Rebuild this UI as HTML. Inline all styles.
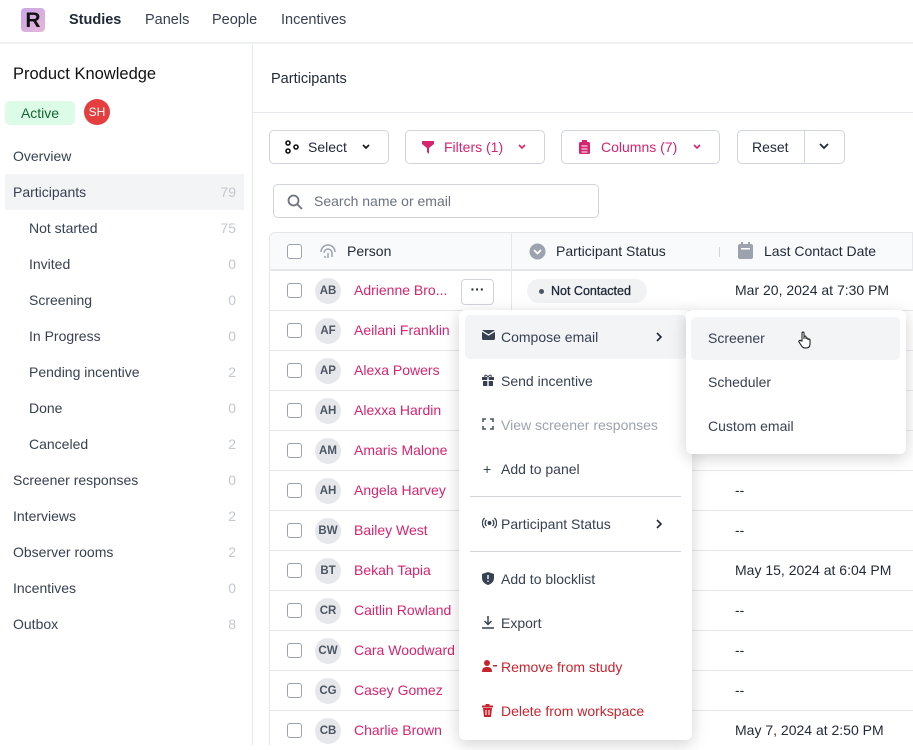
<!DOCTYPE html><html><head><style>
*{box-sizing:border-box;margin:0;padding:0}
body{width:913px;height:745px;overflow:hidden;font-family:"Liberation Sans",sans-serif;font-size:14px;color:#1f2937;background:#fff;position:relative}
.a{position:absolute}
.nav{left:0;top:0;width:913px;height:44px;border-bottom:2px solid #f0f1f3}
.nav span{position:absolute;top:12px;font-size:14.5px;color:#374151}
.side{left:0;top:45px;width:253px;height:700px;border-right:1px solid #e5e7eb}
.si{position:absolute;left:13px;width:231px;height:36px;line-height:36px;color:#374151}
.si b{position:absolute;right:8px;font-weight:normal;color:#c4c8ce}
.btn{position:absolute;top:130px;height:34px;border:1px solid #d1d5db;border-radius:5px;line-height:32px;color:#1f2937}
.pk{color:#d6246e}
.row{position:absolute;left:270px;width:643px;height:40px;border-top:1px solid #e5e7eb}
.cb{position:absolute;left:17px;top:12px;width:15px;height:15px;border:1.3px solid #9ca3af;border-radius:3px;background:#fff}
.av{position:absolute;left:45px;top:7px;width:26px;height:26px;border-radius:13px;background:#e5e7eb;color:#4b5563;font-size:11.5px;font-weight:bold;text-align:center;line-height:26px}
.nm{position:absolute;left:84px;top:11px;color:#d6246e}
.dt{position:absolute;left:465px;top:11px}
.menu{left:459px;top:310px;width:233px;height:430px;background:#fff;border-radius:6px;box-shadow:0 4px 16px rgba(0,0,0,.18)}
.mi{position:absolute;left:6px;width:221px;height:44px;line-height:44px;padding-left:36px;color:#374151}
.mi svg{position:absolute;left:17px;top:15px}
.sub{left:686px;top:310px;width:220px;height:144px;background:#fff;border-radius:6px;box-shadow:0 4px 16px rgba(0,0,0,.18)}
.red{color:#c8242e}
.chev{position:absolute;top:12px}
</style></head><body>
<div class="a nav">
<div class="a" style="left:21px;top:8px;width:24px;height:24px;border-radius:4px;background:linear-gradient(135deg,#c9a6e8,#e7b6d8);font:bold 21px/25px 'Liberation Sans';text-align:center;color:#111">R</div>
<span style="left:69px;font-weight:bold;color:#1f2937">Studies</span><span style="left:145px">Panels</span><span style="left:212px">People</span><span style="left:281px">Incentives</span>
</div>
<div class="a side">
<div class="a" style="left:13px;top:20px;font-size:16.5px;color:#111">Product Knowledge</div>
<div class="a" style="left:5px;top:56px;width:70px;height:24px;border-radius:5px;background:#dcfce7;color:#166534;text-align:center;line-height:24px">Active</div>
<div class="a" style="left:84px;top:54px;width:26px;height:26px;border-radius:13px;background:#e53e3e;color:#fff;font-size:12px;text-align:center;line-height:26px">SH</div>
<div class="si" style="top:93px">Overview</div>
<div class="si" style="top:129px;left:5px;width:239px;padding-left:8px;background:#f3f4f6">Participants<b>79</b></div>
<div class="si" style="top:165px;padding-left:16px">Not started<b>75</b></div>
<div class="si" style="top:201px;padding-left:16px">Invited<b>0</b></div>
<div class="si" style="top:237px;padding-left:16px">Screening<b>0</b></div>
<div class="si" style="top:273px;padding-left:16px">In Progress<b>0</b></div>
<div class="si" style="top:309px;padding-left:16px">Pending incentive<b>2</b></div>
<div class="si" style="top:345px;padding-left:16px">Done<b>0</b></div>
<div class="si" style="top:381px;padding-left:16px">Canceled<b>2</b></div>
<div class="si" style="top:417px">Screener responses<b>0</b></div>
<div class="si" style="top:453px">Interviews<b>2</b></div>
<div class="si" style="top:489px">Observer rooms<b>2</b></div>
<div class="si" style="top:525px">Incentives<b>0</b></div>
<div class="si" style="top:561px">Outbox<b>8</b></div>
</div>
<div class="a" style="left:271px;top:71px;color:#1f2937;font-size:14.5px">Participants</div>
<div class="a" style="left:253px;top:112px;width:660px;border-top:1px solid #e5e7eb"></div>
<div class="btn" style="left:269px;width:120px;padding-left:38px"><svg class="a" style="left:15px;top:9px" width="14" height="14" viewBox="0 0 14 14" fill="none" stroke="#111" stroke-width="1.6"><circle cx="3" cy="3" r="2"/><circle cx="3" cy="11" r="2"/><circle cx="11" cy="7" r="2"/></svg>Select<svg class="chev" style="left:91px" width="10" height="8" viewBox="0 0 10 8" fill="none" stroke="#111" stroke-width="1.6"><path d="M2 2l3 3 3-3"/></svg></div>
<div class="btn pk" style="left:405px;width:140px;padding-left:38px"><svg class="a" style="left:16px;top:10px" width="12" height="13" viewBox="0 0 12 13"><path d="M0 0h12v3L7 7v6L5 11V7L0 3z" fill="#d6246e"/></svg>Filters (1)<svg class="chev" style="left:111px" width="10" height="8" viewBox="0 0 10 8" fill="none" stroke="#d6246e" stroke-width="1.6"><path d="M2 2l3 3 3-3"/></svg></div>
<div class="btn pk" style="left:561px;width:159px;padding-left:39px"><svg class="a" style="left:17px;top:9px" width="11" height="14" viewBox="0 0 11 14"><rect x="0" y="2" width="11" height="12" rx="1.5" fill="#d6246e"/><rect x="3" y="0" width="5" height="3" fill="#d6246e"/><path d="M2.5 6h6M2.5 9h6M2.5 12h6" stroke="#fff" stroke-width="1"/></svg>Columns (7)<svg class="chev" style="left:130px" width="10" height="8" viewBox="0 0 10 8" fill="none" stroke="#d6246e" stroke-width="1.6"><path d="M2 2l3 3 3-3"/></svg></div>
<div class="btn" style="left:737px;width:108px"><span class="a" style="left:14px">Reset</span><div class="a" style="left:66px;top:0;height:32px;border-left:1px solid #d1d5db"></div><svg class="chev" style="left:80px;top:11px" width="12" height="9" viewBox="0 0 12 9" fill="none" stroke="#1f2937" stroke-width="1.8"><path d="M2 2l4 4 4-4"/></svg></div>
<div class="a" style="left:273px;top:184px;width:326px;height:34px;border:1px solid #d1d5db;border-radius:5px"><svg class="a" style="left:13px;top:9px" width="16" height="16" viewBox="0 0 16 16" fill="none" stroke="#6b7280" stroke-width="1.8"><circle cx="6.5" cy="6.5" r="5"/><path d="M10.5 10.5L15 15"/></svg><span class="a" style="left:40px;top:8px;color:#6b7280">Search name or email</span></div>
<div class="a" style="left:269px;top:232px;width:644px;height:38px;background:#f9fafb;border:1px solid #e5e7eb;border-radius:6px 0 0 0">
<div class="cb" style="left:17px;top:11px"></div>
<svg class="a" style="left:49px;top:10px" width="18" height="16" viewBox="0 0 18 16" fill="none" stroke="#9ca3af" stroke-width="1.5"><path d="M2 9a7 7 0 0 1 14 0M5 10a4 4 0 0 1 8 0v4M9 10v5M6 13v2"/></svg>
<span class="a" style="left:77px;top:10px;color:#1f2937">Person</span>
<div class="a" style="left:241px;top:0;height:37px;border-left:1px solid #e5e7eb"></div>
<svg class="a" style="left:259px;top:10px" width="17" height="17" viewBox="0 0 17 17"><circle cx="8.5" cy="8.5" r="8" fill="#9ca3af"/><path d="M5 7l3.5 3.5L12 7" stroke="#fff" stroke-width="1.8" fill="none"/></svg>
<span class="a" style="left:286px;top:10px">Participant Status</span>
<div class="a" style="left:449px;top:14px;height:10px;border-left:1px solid #d1d5db"></div>
<svg class="a" style="left:468px;top:9px" width="15" height="17" viewBox="0 0 15 17"><rect x="0" y="2" width="15" height="15" rx="2" fill="#9ca3af"/><rect x="3" y="0" width="2" height="4" fill="#9ca3af"/><rect x="10" y="0" width="2" height="4" fill="#9ca3af"/><rect x="3" y="6" width="9" height="1.5" fill="#fff"/></svg>
<span class="a" style="left:494px;top:10px">Last Contact Date</span>
</div>
<div class="row" style="top:270px"><div class="cb"></div><div class="av">AB</div><div class="nm">Adrienne Bro...</div>
<div class="a" style="left:191px;top:8px;width:33px;height:26px;border:1px solid #d1d5db;border-radius:4px;text-align:center;line-height:18px;font-weight:bold">···</div>
<div class="a" style="left:241px;top:-1px;height:41px;border-left:1px solid #e5e7eb"></div>
<div class="a" style="left:257px;top:8px;width:120px;height:24px;border-radius:12px;background:#f1f2f4;font-size:12.5px;line-height:24px;padding-left:24px;color:#1f2937;-webkit-text-stroke:0.3px #1f2937">Not Contacted<span class="a" style="left:12px;top:10px;width:5px;height:5px;border-radius:3px;background:#4b5563"></span></div>
<div class="dt">Mar 20, 2024 at 7:30 PM</div></div>
<div class="row" style="top:310px"><div class="cb"></div><div class="av">AF</div><div class="nm">Aeilani Franklin</div></div>
<div class="row" style="top:350px"><div class="cb"></div><div class="av">AP</div><div class="nm">Alexa Powers</div></div>
<div class="row" style="top:390px"><div class="cb"></div><div class="av">AH</div><div class="nm">Alexxa Hardin</div></div>
<div class="row" style="top:430px"><div class="cb"></div><div class="av">AM</div><div class="nm">Amaris Malone</div></div>
<div class="row" style="top:470px"><div class="cb"></div><div class="av">AH</div><div class="nm">Angela Harvey</div><div class="dt">--</div></div>
<div class="row" style="top:510px"><div class="cb"></div><div class="av">BW</div><div class="nm">Bailey West</div><div class="dt">--</div></div>
<div class="row" style="top:550px"><div class="cb"></div><div class="av">BT</div><div class="nm">Bekah Tapia</div><div class="dt">May 15, 2024 at 6:04 PM</div></div>
<div class="row" style="top:590px"><div class="cb"></div><div class="av">CR</div><div class="nm">Caitlin Rowland</div><div class="dt">--</div></div>
<div class="row" style="top:630px"><div class="cb"></div><div class="av">CW</div><div class="nm">Cara Woodward</div><div class="dt">--</div></div>
<div class="row" style="top:670px"><div class="cb"></div><div class="av">CG</div><div class="nm">Casey Gomez</div><div class="dt">--</div></div>
<div class="row" style="top:710px"><div class="cb"></div><div class="av">CB</div><div class="nm">Charlie Brown</div><div class="dt">May 7, 2024 at 2:50 PM</div></div>
<div class="a" style="left:269px;top:270px;height:475px;border-left:1px solid #e5e7eb"></div>
<div class="a menu">
<div class="mi" style="top:5px;background:#f3f4f6;border-radius:5px"><svg width="13" height="10" viewBox="0 0 13 10"><rect width="13" height="10" rx="1.5" fill="#374151"/><path d="M0 1l6.5 4L13 1" stroke="#fff" stroke-width="1.2" fill="none"/></svg>Compose email<svg class="a" style="left:190px;top:17px" width="8" height="10" viewBox="0 0 8 10" fill="none" stroke="#1f2937" stroke-width="1.6"><path d="M2 1l4 4-4 4"/></svg></div>
<div class="mi" style="top:49px"><svg width="12" height="12" viewBox="0 0 12 12"><rect y="3" width="12" height="3" fill="#374151"/><rect x="1" y="7" width="10" height="5" fill="#374151"/><rect x="5.3" y="3" width="1.4" height="9" fill="#fff"/><path d="M6 3C4 0 2 1 3 3M6 3c2-3 4-2 3 0" stroke="#374151" fill="none"/></svg>Send incentive</div>
<div class="mi" style="top:93px;color:#9ca3af"><svg width="12" height="12" viewBox="0 0 12 12" fill="none" stroke="#4b5563" stroke-width="1.6"><path d="M1 4V1h3M8 1h3v3M11 8v3H8M4 11H1V8"/></svg>View screener responses</div>
<div class="mi" style="top:137px"><span class="a" style="left:18px">+</span>Add to panel</div>
<div class="a" style="left:11px;top:186px;width:211px;border-top:1px solid #d1d5db"></div>
<div class="mi" style="top:192px"><svg width="15" height="12" viewBox="0 0 15 12" fill="none" stroke="#374151" stroke-width="1.3"><circle cx="7.5" cy="6" r="1.3" fill="#374151"/><path d="M4.5 3a4 4 0 0 0 0 6M10.5 3a4 4 0 0 1 0 6M2.5 1a7 7 0 0 0 0 10M12.5 1a7 7 0 0 1 0 10"/></svg>Participant Status<svg class="a" style="left:190px;top:17px" width="8" height="10" viewBox="0 0 8 10" fill="none" stroke="#1f2937" stroke-width="1.6"><path d="M2 1l4 4-4 4"/></svg></div>
<div class="a" style="left:11px;top:241px;width:211px;border-top:1px solid #d1d5db"></div>
<div class="mi" style="top:247px"><svg width="12" height="13" viewBox="0 0 12 13"><path d="M6 0L12 2v4c0 4-3 6-6 7C3 12 0 10 0 6V2z" fill="#374151"/><rect x="5.3" y="3" width="1.4" height="4" fill="#fff"/><rect x="5.3" y="8.5" width="1.4" height="1.4" fill="#fff"/></svg>Add to blocklist</div>
<div class="mi" style="top:291px"><svg width="12" height="13" viewBox="0 0 12 13" fill="none" stroke="#374151" stroke-width="1.5"><path d="M6 0v8M2.5 5L6 8.5 9.5 5M0 12h12"/></svg>Export</div>
<div class="mi red" style="top:335px"><svg width="15" height="12" viewBox="0 0 15 12"><circle cx="5" cy="3" r="3" fill="#c8242e"/><path d="M0 12c0-4 2-5 5-5s5 1 5 5z" fill="#c8242e"/><rect x="11" y="5" width="4" height="1.5" fill="#c8242e"/></svg>Remove from study</div>
<div class="mi red" style="top:379px"><svg width="11" height="13" viewBox="0 0 11 13"><rect x="0" y="1.5" width="11" height="2" fill="#c8242e"/><rect x="3.5" y="0" width="4" height="2" fill="#c8242e"/><path d="M1 4h9l-1 9H2z" fill="#c8242e"/><path d="M4 6v5M7 6v5" stroke="#fff"/></svg>Delete from workspace</div>
</div>
<div class="a sub">
<div class="a" style="left:5px;top:7px;width:209px;height:43px;background:#f3f4f6;border-radius:5px;line-height:43px;padding-left:17px;color:#374151">Screener<svg class="a" style="left:107px;top:14px" width="14" height="18" viewBox="0 0 14 18" fill="#fff" stroke="#111" stroke-width="1"><path d="M4 10V2a1 1 0 0 1 2 0v6V6a1 1 0 0 1 2 0v2a1 1 0 0 1 2 0v1a1 1 0 0 1 2 0v4c0 3-2 4-4 4H7c-2 0-3-1-4-3L1 11a1 1 0 0 1 2-1z"/></svg></div>
<div class="a" style="left:22px;top:64px;color:#374151">Scheduler</div>
<div class="a" style="left:22px;top:108px;color:#374151">Custom email</div>
</div>
</body></html>
